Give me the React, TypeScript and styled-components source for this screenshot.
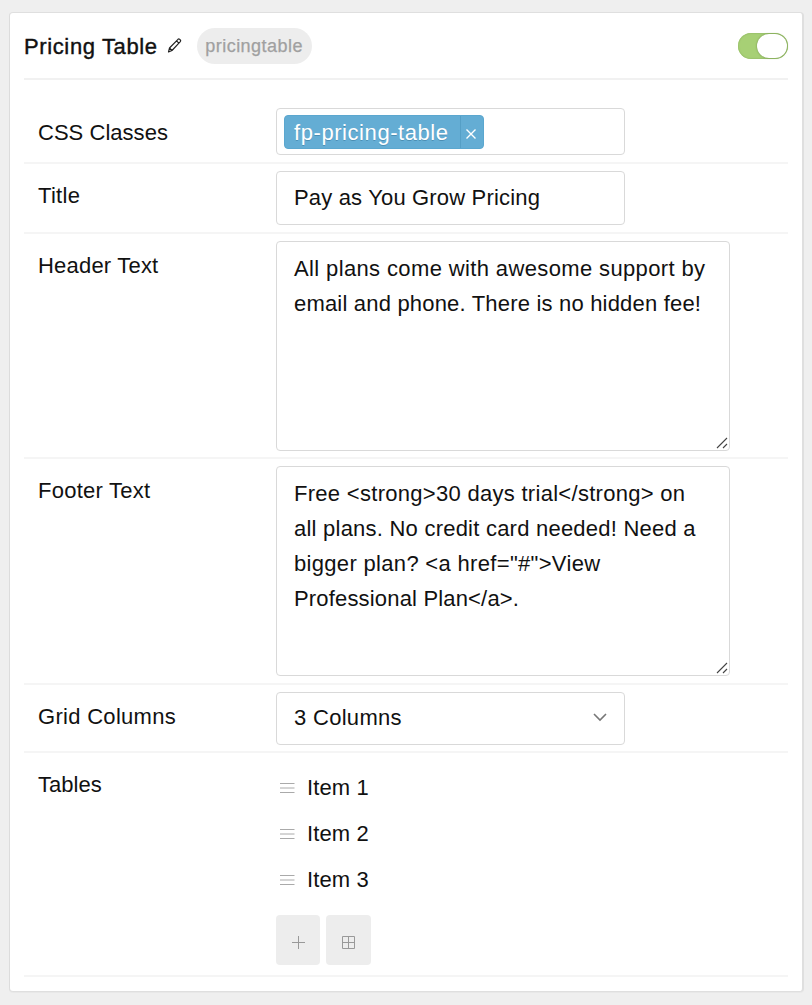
import React from "react";
import styled, { createGlobalStyle } from "styled-components";

const GlobalStyle = createGlobalStyle`
  * { box-sizing: border-box; }
  body {
    margin: 0;
    background: #efefef;
    color: #111;
    font-family: "Liberation Sans", Arial, sans-serif;
    font-size: 22px;
  }
`;

const Page = styled.main`
  height: 1005px;
  padding: 12px 8px 13px 9px;
`;

const Card = styled.section`
  width: 795px;
  height: 980px;
  padding: 0 14px 0 13px;
  background: #fff;
  border: 1px solid #dfdfdf;
  border-right-width: 2px;
  border-left-color: #dcdcdc;
  border-radius: 4px;
  box-shadow: 0 1px 1px rgba(0, 0, 0, 0.03);
`;

const Header = styled.header`
  display: flex;
  align-items: center;
  height: 67px;
  margin: 0 0 20px 1px;
  border-bottom: 2px solid #f1f1f1;
`;

const Text = styled.span<{ $track?: number }>`
  white-space: pre;
  letter-spacing: ${(p) => p.$track ?? 0.3}px;
`;

const Heading = styled.h1`
  margin: 2px 9px 0 0;
  font-size: 22px;
  line-height: 26px;
  font-weight: 400;
  -webkit-text-stroke: 0.4px #111;
`;

const Badge = styled.span`
  display: flex;
  align-items: center;
  justify-content: center;
  width: 115px;
  height: 36px;
  margin: 0 auto 0 15px;
  padding-top: 1px;
  border-radius: 18px;
  background: #ededed;
  color: #a0a0a0;
  font-size: 18px;
  -webkit-text-stroke: 0.25px #a0a0a0;
`;

const Toggle = styled.span`
  display: flex;
  justify-content: flex-end;
  width: 50px;
  height: 26px;
  padding: 1px;
  border-radius: 13px;
  background: #a7d075;
  box-shadow: inset 0 0 1px 1px #9cc36d;
`;

const Knob = styled.span`
  width: 30px;
  height: 24px;
  border-radius: 12px;
  background: #fff;
  box-shadow: 0 0 2px rgba(60, 90, 30, 0.6);
`;

const Row = styled.div<{ $height: number; $top?: number }>`
  display: flex;
  height: ${(p) => p.$height}px;
  margin-left: 1px;
  padding-top: ${(p) => p.$top ?? 7}px;
  border-bottom: 2px solid #f5f5f5;
`;

const Label = styled.div<{ $top: number }>`
  width: 252px;
  flex: none;
  padding: ${(p) => p.$top}px 0 0 14px;
  line-height: 26px;
`;

const Field = styled.div<{ $width: number; $height: number }>`
  position: relative;
  display: flex;
  align-items: center;
  width: ${(p) => p.$width}px;
  height: ${(p) => p.$height}px;
  padding: 0 17px;
  border: 1px solid #d9d9d9;
  border-radius: 4px;
  background: #fff;
`;

const TagField = styled(Field)`
  padding: 0 7px;
`;

const SelectField = styled(Field)`
  justify-content: space-between;
  padding-bottom: 2px;
`;

const AreaField = styled(Field)`
  flex-direction: column;
  align-items: flex-start;
  padding-top: 9px;
  line-height: 35px;
`;

const Grip = styled.svg`
  position: absolute;
  right: 1px;
  bottom: 1px;
`;

const Tag = styled.span`
  display: flex;
  width: 200px;
  height: 34px;
  border: 1px solid #5ba7cf;
  border-radius: 4px;
  background: #64add4;
  color: #fff;
  text-shadow: 0 1px 0 rgba(0, 51, 83, 0.25);
  line-height: 34px;
`;

const TagName = styled.span`
  width: 175px;
  padding-left: 9px;
`;

const TagClose = styled.span`
  display: flex;
  flex: 1;
  align-items: center;
  justify-content: center;
  padding: 5px 2px 0 0;
  border-left: 1px solid #559fc6;
`;

const Items = styled.div`
  display: flex;
  flex-direction: column;
`;

const Item = styled.div`
  display: flex;
  align-items: center;
  gap: 12px;
  height: 46px;
  padding-left: 4px;
`;

const Handle = styled.svg`
  margin-top: -1px;
`;

const Actions = styled.div`
  display: flex;
  gap: 6px;
  margin-top: 12px;
`;

const ActionButton = styled.button`
  display: flex;
  align-items: center;
  justify-content: center;
  width: 44.4px;
  height: 50px;
  padding: 4px 0 0;
  border: 0;
  border-radius: 4px;
  background: #ededed;
`;

const ResizeGrip = () => (
  <Grip width="12" height="12" viewBox="0 0 12 12" stroke="#444" strokeWidth="1.1">
    <path d="M1 11 11 1M7 11l4-4" />
  </Grip>
);

const headerLines: [string, number][] = [
  ["All plans come with awesome support by", 0.37],
  ["email and phone. There is no hidden fee!", 0.19],
];

const footerLines: [string, number][] = [
  ["Free <strong>30 days trial</strong> on", 0.29],
  ["all plans. No credit card needed! Need a", 0.23],
  ['bigger plan? <a href="#">View', 0.32],
  ["Professional Plan</a>.", 0.17],
];

export default function App() {
  return (
    <Page>
      <GlobalStyle />
      <Card>
        <Header>
          <Heading><Text $track={0.62}>Pricing Table</Text></Heading>
          <svg width="15" height="15" viewBox="0 0 14 15" fill="none" stroke="#222" strokeWidth="1.15" strokeLinejoin="round">
            <path d="M1 14 2 10 10.5 1.3Q11.3.6 12.2 1.4L12.8 2Q13.5 2.8 12.8 3.6L4.5 12.5ZM9.1 2.8l2.5 2.5M2 10l2.5 2.5" />
          </svg>
          <Badge><Text $track={0.48}>pricingtable</Text></Badge>
          <Toggle><Knob /></Toggle>
        </Header>

        <Row $height={64} $top={8}>
          <Label $top={12}><Text $track={0.03}>CSS Classes</Text></Label>
          <TagField $width={349.4} $height={47}>
            <Tag>
              <TagName><Text $track={0.57}>fp-pricing-table</Text></TagName>
              <TagClose>
                <svg width="10" height="10" viewBox="0 0 10 10" stroke="#fff" strokeWidth="1.4">
                  <path d="M.5.5l9 9M9.5.5l-9 9" />
                </svg>
              </TagClose>
            </Tag>
          </TagField>
        </Row>

        <Row $height={70}>
          <Label $top={12}><Text>Title</Text></Label>
          <Field $width={349.4} $height={54}><Text $track={0.17}>Pay as You Grow Pricing</Text></Field>
        </Row>

        <Row $height={225}>
          <Label $top={12}><Text $track={0.2}>Header Text</Text></Label>
          <AreaField $width={454.4} $height={210}>
            {headerLines.map(([line, track]) => <Text key={line} $track={track}>{line}</Text>)}
            <ResizeGrip />
          </AreaField>
        </Row>

        <Row $height={226}>
          <Label $top={12}><Text $track={0.25}>Footer Text</Text></Label>
          <AreaField $width={454.4} $height={210}>
            {footerLines.map(([line, track]) => <Text key={line} $track={track}>{line}</Text>)}
            <ResizeGrip />
          </AreaField>
        </Row>

        <Row $height={68}>
          <Label $top={12}><Text>Grid Columns</Text></Label>
          <SelectField $width={349.4} $height={53}>
            <Text>3 Columns</Text>
            <svg width="14" height="9" viewBox="0 0 14 9" fill="none" stroke="#777" strokeWidth="1.6">
              <path d="M1 1l6 6 6-6" />
            </svg>
          </SelectField>
        </Row>

        <Row $height={224} $top={12}>
          <Label $top={7}><Text $track={0.05}>Tables</Text></Label>
          <Items>
            {["Item 1", "Item 2", "Item 3"].map((item) => (
              <Item key={item}>
                <Handle width="15" height="12" viewBox="0 0 15 12" stroke="#aaa" strokeWidth="1">
                  <path d="M0 1.5h14.5M0 6h14.5M0 10.5h14.5" />
                </Handle>
                <Text $track={0.1}>{item}</Text>
              </Item>
            ))}
            <Actions>
              <ActionButton aria-label="Add item">
                <svg width="13" height="13" viewBox="0 0 13 13" stroke="#999" strokeWidth="1">
                  <path d="M6.5 0v13M0 6.5h13" />
                </svg>
              </ActionButton>
              <ActionButton aria-label="Add from library">
                <svg width="13" height="13" viewBox="0 0 13 13" fill="none" stroke="#999" strokeWidth="1">
                  <path d="M.5.5h12v12H.5zM6.5.5v12M.5 6.5h12" />
                </svg>
              </ActionButton>
            </Actions>
          </Items>
        </Row>
      </Card>
    </Page>
  );
}
